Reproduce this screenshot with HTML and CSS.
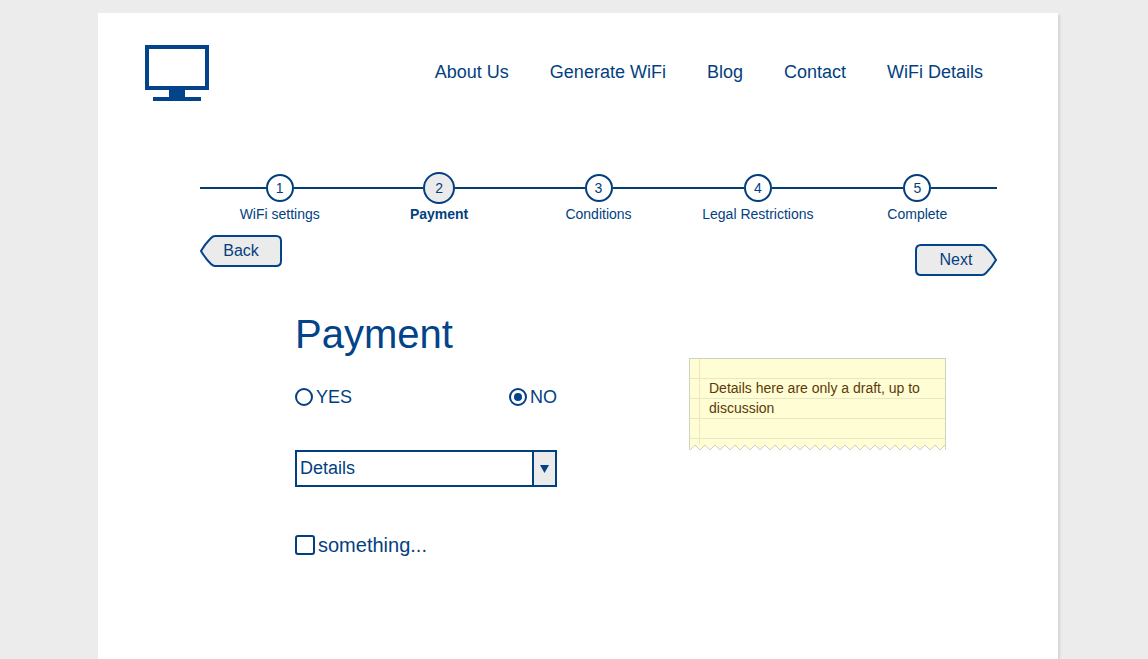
FILE: index.html
```
<!DOCTYPE html>
<html lang="en">
<head>
<meta charset="utf-8">
<meta name="viewport" content="width=device-width, initial-scale=1">
<title>Payment</title>
<link rel="stylesheet" href="styles.css">
</head>
<body>
<div class="page">
  <header class="header">
    <svg class="logo" viewBox="0 0 64 56" role="img" aria-label="Home">
      <path fill-rule="evenodd" d="M0 0H64V45H40V52H56V56H8V52H24V45H0ZM4 4V41H60V4Z"/>
    </svg>
    <nav class="nav">
      <a href="#about">About Us</a>
      <a href="#generate">Generate WiFi</a>
      <a href="#blog">Blog</a>
      <a href="#contact">Contact</a>
      <a href="#details">WiFi Details</a>
    </nav>
  </header>
  <main class="main">
    <ol class="steps">
      <li class="step"><div class="step-track"><span class="step-number">1</span></div><span>WiFi settings</span></li>
      <li class="step step-current" aria-current="step"><div class="step-track"><span class="step-number">2</span></div><span>Payment</span></li>
      <li class="step"><div class="step-track"><span class="step-number">3</span></div><span>Conditions</span></li>
      <li class="step"><div class="step-track"><span class="step-number">4</span></div><span>Legal Restrictions</span></li>
      <li class="step"><div class="step-track"><span class="step-number">5</span></div><span>Complete</span></li>
    </ol>
    <div class="pager">
      <button class="arrow-button" type="button">
        <svg class="arrow-shape" viewBox="0 0 82 32" aria-hidden="true"><path d="M15 1H76Q81 1 81 6V26Q81 31 76 31H15Q13 31 11 29Q5 23 1 16Q5 9 11 3Q13 1 15 1Z"/></svg>
        <span class="arrow-label">Back</span>
      </button>
      <button class="arrow-button arrow-next" type="button">
        <svg class="arrow-shape" viewBox="0 0 82 32" aria-hidden="true"><path d="M67 1H6Q1 1 1 6V26Q1 31 6 31H67Q69 31 71 29Q77 23 81 16Q77 9 71 3Q69 1 67 1Z"/></svg>
        <span class="arrow-label">Next</span>
      </button>
    </div>
    <div class="content">
      <form class="form">
        <h1 class="title">Payment</h1>
        <div class="radios">
          <label class="choice"><input class="radio" type="radio" name="payment" value="yes">YES</label>
          <label class="choice"><input class="radio" type="radio" name="payment" value="no" checked>NO</label>
        </div>
        <div class="select-box">
          <select class="select" aria-label="Details"><option>Details</option></select>
          <span class="select-arrow"><svg width="9" height="8" viewBox="0 0 9 8" aria-hidden="true"><path d="M0 0H9L4.500 8Z"/></svg></span>
        </div>
        <label class="choice choice-large"><input class="checkbox" type="checkbox">something...</label>
      </form>
      <aside class="note">
        <p class="note-text">Details here are only a draft, up to discussion</p>
        <svg class="note-edge" aria-hidden="true">
          <defs>
            <pattern id="tear" x="1" width="10" height="7" patternUnits="userSpaceOnUse">
              <path class="tear-fill" d="M0 0H10V6L5 1L0 6Z"/>
              <path class="tear-line" d="M-1 5L0 6L5 1L10 6L11 5"/>
            </pattern>
          </defs>
          <rect width="100%" height="7" fill="url(#tear)"/>
          <rect class="tear-side" width="1" height="6"/>
          <rect class="tear-side" x="100%" width="1" height="6" transform="translate(-1)"/>
        </svg>
      </aside>
    </div>
  </main>
</div>
</body>
</html>
```
FILE: styles.css
```
* { box-sizing: border-box; }

body {
  margin: 0;
  padding: 13px 0 0 8px;
  min-height: 100vh;
  display: flex;
  background: #ececec;
  color: #033f7f;
  font-family: "Liberation Sans", Arial, sans-serif;
  font-size: 14px;
}

.page {
  width: 100%;
  max-width: 960px;
  margin: 0 auto;
  background: #fff;
  box-shadow: 2px 2px 2px #d5d5d5;
}

.header {
  display: flex;
  align-items: center;
  justify-content: space-between;
  padding: 32px 75px 0 47px;
}

.logo { width: 64px; height: 56px; fill: #03438a; }

.nav { display: flex; gap: 41px; padding-bottom: 2px; font-size: 18px; line-height: 22px; }
.nav a { color: inherit; text-decoration: none; }

.main { padding: 71px 61px 32px 102px; }

.steps {
  display: grid;
  grid-template-columns: repeat(5, 1fr);
  margin: 0;
  padding: 0;
  list-style: none;
}

.step { text-align: center; line-height: 20px; }
.step-track { display: flex; align-items: center; height: 32px; }
.step-track::before,
.step-track::after { content: ""; flex: 1; height: 2px; background: #033f73; }

.step-number {
  width: 28px;
  height: 28px;
  border: 2px solid #033f7f;
  border-radius: 50%;
  line-height: 24px;
}

.step-current { font-weight: bold; }
.step-current .step-number {
  width: 32px;
  height: 32px;
  background: #ebebeb;
  line-height: 28px;
  font-weight: normal;
}

.pager {
  display: flex;
  align-items: flex-start;
  justify-content: space-between;
  padding-top: 11px;
}

.arrow-button {
  display: grid;
  place-items: center;
  width: 82px;
  height: 32px;
  padding: 0;
  border: 0;
  background: none;
  color: inherit;
  font: inherit;
  font-size: 16px;
}

.arrow-next { margin-top: 9px; }
.arrow-shape, .arrow-label { grid-area: 1 / 1; }
.arrow-shape { width: 82px; height: 32px; fill: #ebebeb; stroke: #03438a; stroke-width: 2; stroke-linejoin: round; }

.content {
  display: flex;
  align-items: flex-start;
  justify-content: space-between;
  padding: 34px 51px 0 95px;
}

.form { width: 262px; }
.title { margin: 0; font-size: 40px; font-weight: normal; line-height: 48px; color: #03438a; }

.radios { display: flex; justify-content: space-between; margin-top: 28px; }
.choice { display: flex; align-items: center; gap: 3px; font-size: 18px; line-height: 22px; }
.choice-large { margin-top: 47px; font-size: 20px; }

.radio, .checkbox {
  appearance: none;
  margin: 0;
  border: 2px solid #033f7f;
  background: #fff;
}

.radio { display: grid; place-items: center; width: 18px; height: 18px; border-radius: 50%; }
.radio:checked::before { content: ""; width: 8px; height: 8px; border-radius: 50%; background: #03438a; }
.checkbox { width: 20px; height: 20px; border-radius: 3px; }

.select-box { display: grid; margin-top: 42px; }
.select, .select-arrow { grid-area: 1 / 1; }

.select {
  appearance: none;
  height: 37px;
  padding: 0 28px 2px 3px;
  border: 2px solid #033f7f;
  border-radius: 0;
  background: #fff;
  color: inherit;
  font: inherit;
  font-size: 18px;
}

.select-arrow {
  display: grid;
  place-items: center;
  justify-self: end;
  width: 25px;
  border: 2px solid #033f7f;
  background: #ebebeb;
  fill: #03438a;
  pointer-events: none;
}

.note { width: 257px; margin-top: 48px; color: #5b3a08; }

.note-text {
  margin: 0;
  padding: 19px 20px 26px 19px;
  border: 1px solid #d1d1c0;
  border-bottom: 0;
  background:
    linear-gradient(90deg, transparent 9px, #efe6bd 9px, #efe6bd 10px, transparent 10px),
    repeating-linear-gradient(#fffdd3 0 19px, #e9e6c4 19px 20px);
  line-height: 20px;
}

.note-edge { display: block; width: 100%; height: 7px; }
.tear-fill { fill: #fffdd3; }
.tear-line { fill: none; stroke: #cfcfc4; }
.tear-side { fill: #d1d1c0; }
```
